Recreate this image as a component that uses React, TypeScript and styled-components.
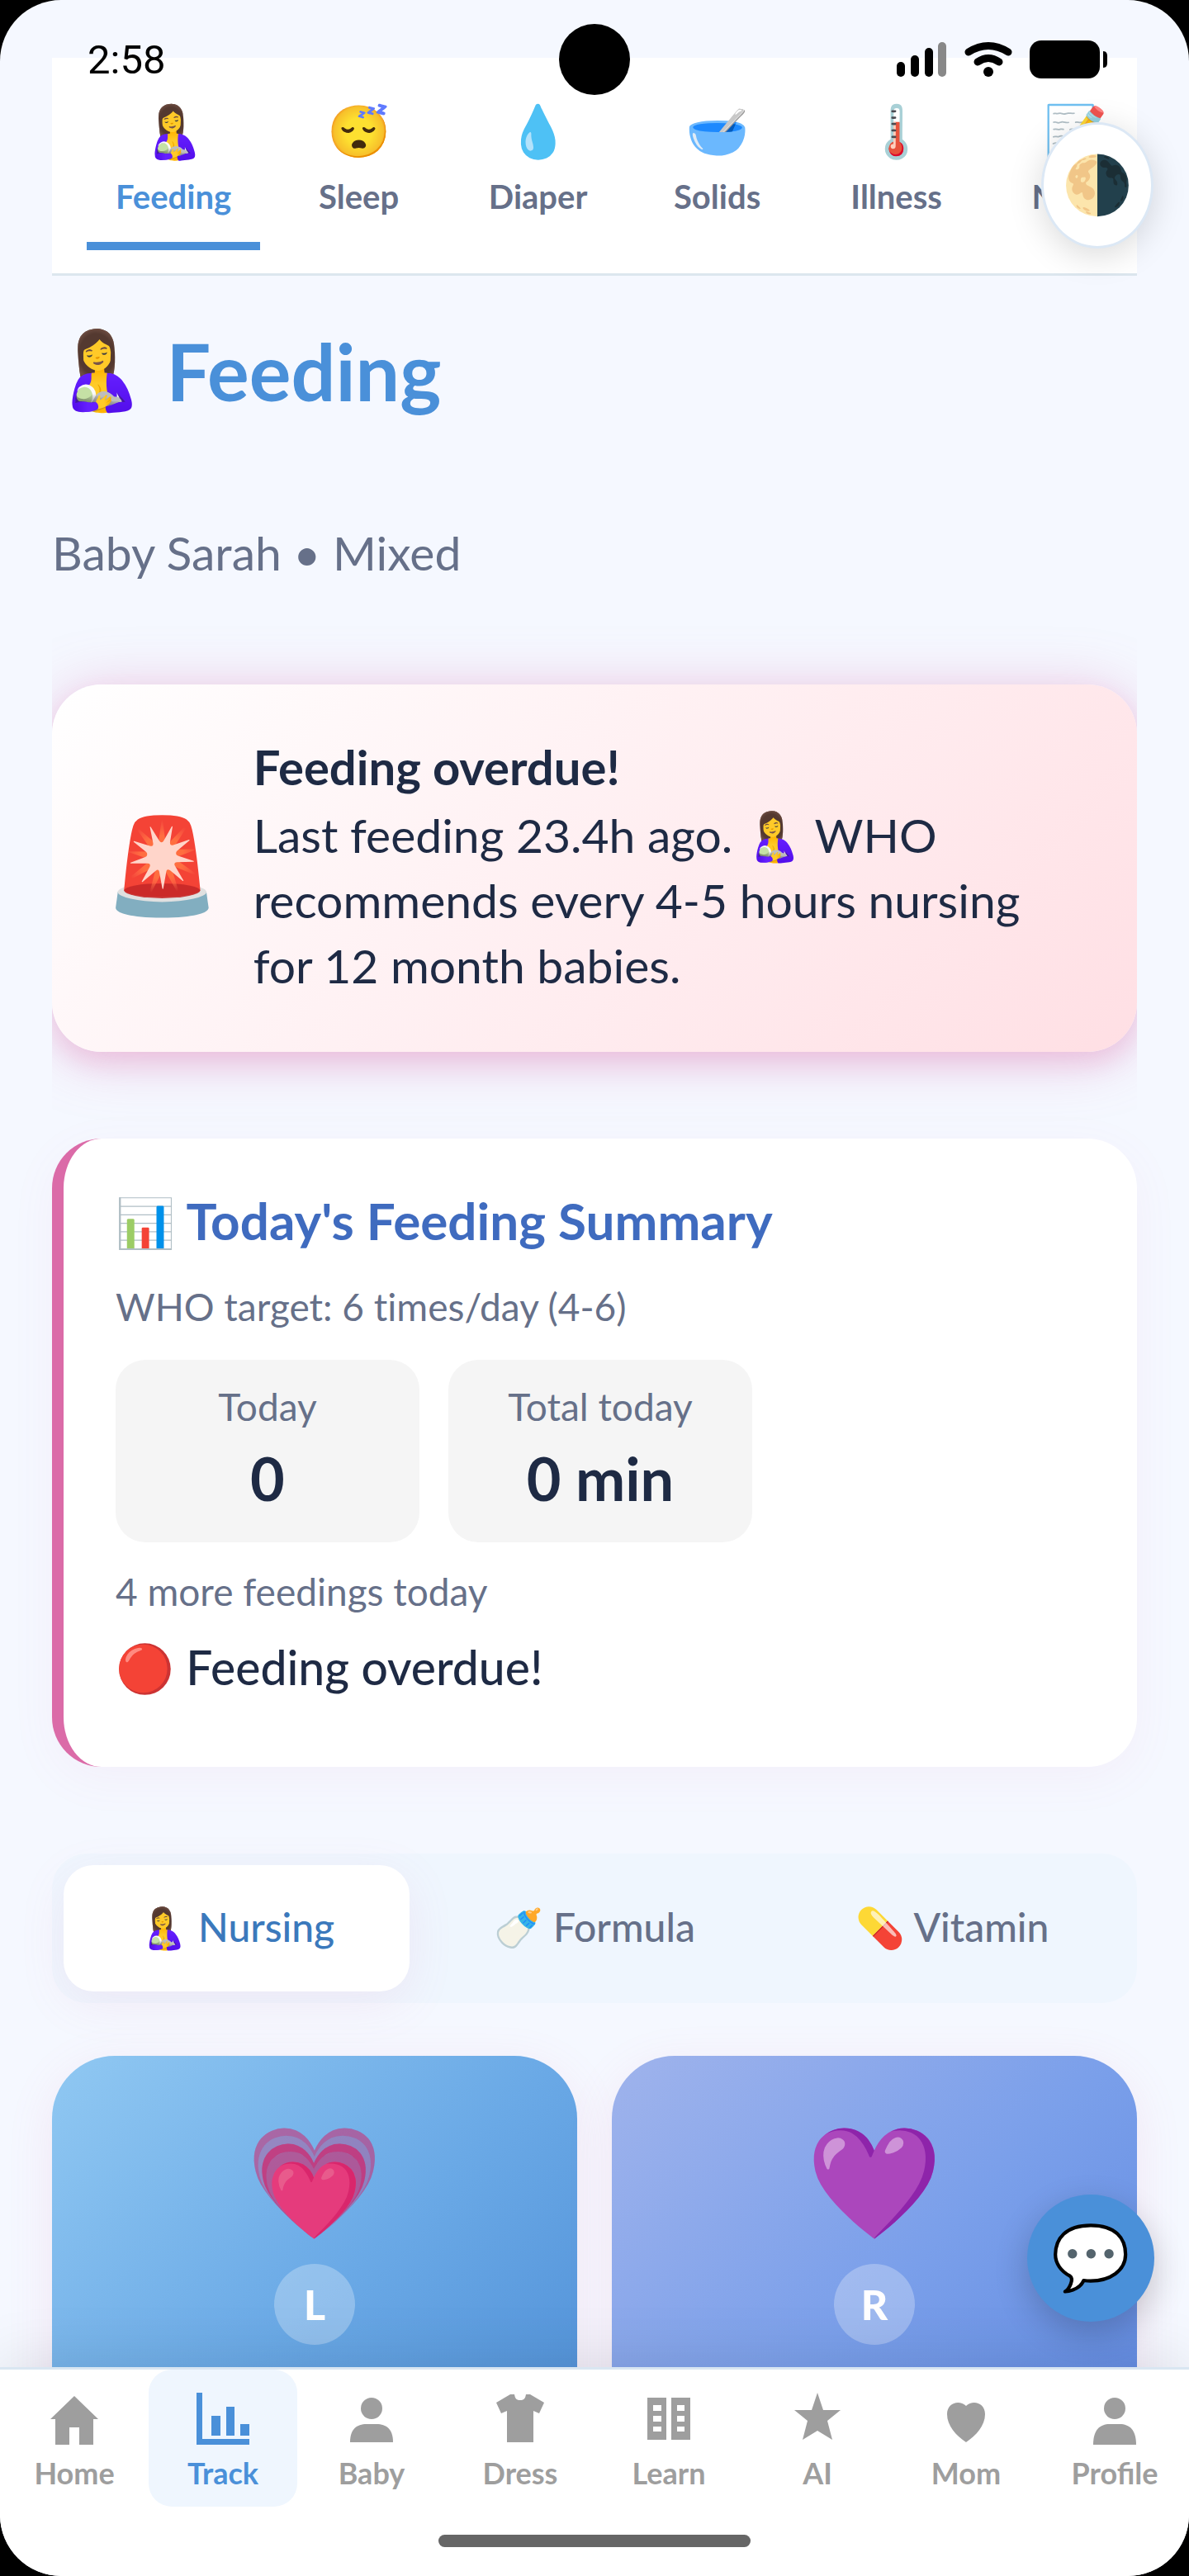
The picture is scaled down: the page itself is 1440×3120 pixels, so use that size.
import { useState } from "react";
import styled, { createGlobalStyle } from "styled-components";

const tabs = [
  { icon: "🤱", label: "Feeding" },
  { icon: "😴", label: "Sleep" },
  { icon: "💧", label: "Diaper" },
  { icon: "🥣", label: "Solids" },
  { icon: "🌡️", label: "Illness" },
  { icon: "📝", label: "Notes" },
];

const methods = [
  { icon: "🤱", label: "Nursing" },
  { icon: "🍼", label: "Formula" },
  { icon: "💊", label: "Vitamin" },
];

const navItems = [
  { label: "Home", icon: <path d="M32 4 61 32H55V63H38V42H26V63H9V32H3Z" /> },
  {
    label: "Track",
    icon: <path d="M0 0H7V56H64V63H0ZM18 28H29V52H18ZM36 17H46V52H36ZM53 38H64V52H53Z" />,
  },
  {
    label: "Baby",
    icon: (
      <>
        <circle cx="32" cy="19" r="13" />
        <path d="M6 60C6 44 14 38 26 38H38C50 38 58 44 58 60Z" />
      </>
    ),
  },
  {
    label: "Dress",
    icon: <path d="M20 2H25C26 8 28 9 32 9S38 8 39 2H44L61 12 55 25 48 22V60H16V22L9 25 3 12Z" />,
  },
  {
    label: "Learn",
    icon: (
      <path
        fillRule="evenodd"
        d="M6 6H29V57H6ZM35 6H58V57H35ZM13 15V22H23V15ZM13 28V35H23V28ZM13 41V47H23V41ZM42 15V22H51V15ZM42 28V35H51V28ZM42 41V47H51V41Z"
      />
    ),
  },
  {
    label: "AI",
    icon: <path d="M32 0 39 21H60L44 34 50 57 32 46 14 57 20 34 4 21H25Z" />,
  },
  {
    label: "Mom",
    icon: <path d="M32 60C20 52 9 40 9 26 9 12 24 8 32 16 40 8 55 12 55 26 55 40 44 52 32 60Z" />,
  },
  {
    label: "Profile",
    icon: (
      <>
        <circle cx="32" cy="19" r="13" />
        <path d="M6 63C6 45 14 38 26 38H38C50 38 58 45 58 63Z" />
      </>
    ),
  },
];

const StatusBar = () => (
  <StatusWrap>
    <Clock>2:58</Clock>
    <Camera />
    <StatusIcons width="256" height="46" viewBox="0 0 256 46">
      <rect x="0" y="26" width="10" height="18" rx="5" />
      <rect x="17" y="18" width="10" height="26" rx="5" />
      <rect x="34" y="9" width="10" height="35" rx="5" />
      <rect x="50" y="2" width="10" height="42" rx="5" fill="#888" />
      <g fill="none" stroke="#000" strokeWidth="9" strokeLinecap="round">
        <path d="M87 14Q111 -1 135 14" />
        <path d="M98 26Q111 17 124 26" />
      </g>
      <circle cx="111" cy="38" r="6" />
      <rect x="161" y="0" width="85" height="46" rx="14" />
      <path d="M250 13C254 13 255 16 255 19V27C255 30 254 33 250 33Z" />
    </StatusIcons>
  </StatusWrap>
);

const App = () => {
  const [tab, setTab] = useState("Feeding");
  const [method, setMethod] = useState("Nursing");
  const [page, setPage] = useState("Track");

  return (
    <>
      <GlobalStyle />
      <Screen>
        <StatusBar />
        <Content>
          <TabBar>
            {tabs.map(({ icon, label }) => (
              <Tab key={label} $active={tab === label} onClick={() => setTab(label)}>
                <Emoji $size={62}>{icon}</Emoji>
                {label}
              </Tab>
            ))}
          </TabBar>
          <Title>
            <Emoji $size={92}>🤱</Emoji>
            Feeding
          </Title>
          <Subtitle>Baby Sarah • Mixed</Subtitle>
          <AlertClip>
            <Alert>
              <Emoji $size={113}>🚨</Emoji>
              <div>
                <AlertTitle>Feeding overdue!</AlertTitle>
                <AlertText>
                  Last feeding 23.4h ago. 🤱 WHO recommends every 4-5 hours nursing for 12 month
                  babies.
                </AlertText>
              </div>
            </Alert>
          </AlertClip>
          <Summary>
            <SummaryTitle>
              <Emoji $size={58}>📊</Emoji> Today's Feeding Summary
            </SummaryTitle>
            <Note>WHO target: 6 times/day (4-6)</Note>
            <Stats>
              <Stat>
                <Note>Today</Note>
                <StatValue>0</StatValue>
              </Stat>
              <Stat>
                <Note>Total today</Note>
                <StatValue>0 min</StatValue>
              </Stat>
            </Stats>
            <Note>4 more feedings today</Note>
            <Overdue>🔴 Feeding overdue!</Overdue>
          </Summary>
          <Segment>
            {methods.map(({ icon, label }) => (
              <SegmentButton
                key={label}
                $active={method === label}
                onClick={() => setMethod(label)}
              >
                {icon} {label}
              </SegmentButton>
            ))}
          </Segment>
          <Sides>
            <SideButton $colors="#90c8f2, #6aa9e6 50%, #4a8ad4">
              <Emoji $size={133}>💗</Emoji>
              <SideLetter>L</SideLetter>
            </SideButton>
            <SideButton $colors="#9fb3ec, #7a9fea 50%, #5a84de">
              <Emoji $size={133}>💜</Emoji>
              <SideLetter>R</SideLetter>
            </SideButton>
          </Sides>
        </Content>
        <ThemeButton aria-label="Toggle theme">
          <Emoji $size={69}>🌗</Emoji>
        </ThemeButton>
        <ChatButton aria-label="Open chat">
          <Emoji $size={77}>💬</Emoji>
        </ChatButton>
        <BottomNav>
          <NavList>
            {navItems.map(({ icon, label }) => (
              <NavItem key={label} $active={page === label} onClick={() => setPage(label)}>
                <svg width="64" height="64" viewBox="0 0 64 64" fill="currentColor">
                  {icon}
                </svg>
                {label}
              </NavItem>
            ))}
          </NavList>
          <HomeIndicator />
        </BottomNav>
      </Screen>
    </>
  );
};
export default App;

const GlobalStyle = createGlobalStyle`
  * {
    box-sizing: border-box;
    margin: 0;
  }

  body {
    background-color: #000;
    font-family: Lato, "Noto Color Emoji", sans-serif;
    color: #1e2a44;
  }

  button {
    border: 0;
    padding: 0;
    background: none;
    font-family: inherit;
    cursor: pointer;
  }
`;

const Screen = styled.div`
  position: relative;
  display: flex;
  flex-direction: column;
  height: 100vh;
  border-radius: 74px;
  background-color: #f5f8ff;
  overflow: hidden;
`;

const StatusWrap = styled.header`
  position: absolute;
  z-index: 2;
  top: 0;
  left: 0;
  right: 0;
  display: grid;
  grid-template-columns: 1fr 86px 1fr;
  align-items: center;
  height: 144px;
  padding: 0 98px;
`;

const Clock = styled.time`
  padding-left: 8px;
  font-family: Roboto, sans-serif;
  font-size: 49px;
  color: #000;
`;

const Camera = styled.div`
  height: 86px;
  border-radius: 50%;
  background-color: #000;
`;

const StatusIcons = styled.svg`
  justify-self: end;
`;

const Content = styled.main`
  flex: 1;
  min-height: 0;
  padding: 70px 63px 0;
  overflow: hidden;
`;

const Emoji = styled.span<{ $size: number }>`
  font-family: "Noto Color Emoji", sans-serif;
  font-size: ${({ $size }) => $size}px;
  font-weight: 400;
  line-height: 1;
`;

const TabBar = styled.nav`
  display: flex;
  gap: 22px;
  height: 264px;
  padding: 42px 42px 28px;
  border-bottom: 3px solid #dce6ee;
  background-color: #fff;
  overflow: hidden;
`;

const Tab = styled.button<{ $active: boolean }>`
  display: flex;
  flex: none;
  flex-direction: column;
  align-items: center;
  gap: 23px;
  min-width: 195px;
  padding: 17px 35px 0;
  border-bottom: 10px solid ${({ $active }) => ($active ? "#4a90d9" : "transparent")};
  color: ${({ $active }) => ($active ? "#4a90d9" : "#667089")};
  font-size: 40px;
  font-weight: 700;
  line-height: 48px;
`;

const Title = styled.h1`
  display: flex;
  align-items: center;
  gap: 24px;
  margin-top: 50px;
  color: #4a90d9;
  font-size: 95px;
  font-weight: 700;
  line-height: 130px;
`;

const Subtitle = styled.p`
  margin-top: 115px;
  color: #667089;
  font-size: 57px;
  line-height: 80px;
`;

/* the alert glow is cut at the column edges */
const AlertClip = styled.div`
  margin-top: 120px;
  overflow-x: clip;
`;

const Alert = styled.section`
  display: flex;
  align-items: center;
  gap: 40px;
  padding: 61px 63px 65px;
  border-radius: 60px;
  background: linear-gradient(135deg, #fff, #ffdfe4);
  box-shadow:
    0 14px 28px rgba(219, 107, 168, 0.2),
    0 7px 70px rgba(219, 107, 168, 0.35);
`;

const AlertTitle = styled.h2`
  margin-bottom: 4px;
  font-size: 58px;
  font-weight: 700;
  line-height: 78px;
`;

const AlertText = styled.p`
  font-size: 57px;
  line-height: 79px;
`;

const Summary = styled.section`
  margin-top: 105px;
  padding: 60px 63px 82px;
  border-left: 14px solid #db6ba8;
  border-radius: 60px;
  background-color: #fff;
  box-shadow: 0 14px 56px rgba(219, 107, 168, 0.06);
`;

const SummaryTitle = styled.h2`
  margin-bottom: 34px;
  color: #3f6bbf;
  font-size: 62px;
  font-weight: 700;
  line-height: 78px;
`;

const Note = styled.p`
  color: #667089;
  font-size: 46px;
  font-variant-ligatures: none;
  line-height: 64px;
`;

const Stats = styled.div`
  display: flex;
  gap: 35px;
  margin: 32px 0 28px;
`;

const Stat = styled.div`
  display: flex;
  flex-direction: column;
  gap: 9px;
  width: 368px;
  padding: 25px 0 33px;
  border-radius: 36px;
  background-color: #f5f5f5;
  text-align: center;
`;

const StatValue = styled.strong`
  font-size: 72px;
  font-weight: 700;
  line-height: 90px;
`;

const Overdue = styled.p`
  margin-top: 20px;
  font-size: 57px;
  font-weight: 500;
  line-height: 78px;
`;

const Segment = styled.div`
  display: flex;
  gap: 14px;
  margin-top: 105px;
  padding: 14px;
  border-radius: 42px;
  background-color: #eff6fe;
`;

const SegmentButton = styled.button<{ $active: boolean }>`
  flex: 1;
  height: 153px;
  padding-bottom: 3px;
  border-radius: 36px;
  background-color: ${({ $active }) => ($active ? "#fff" : "transparent")};
  box-shadow: ${({ $active }) => ($active ? "0 14px 56px rgba(219, 107, 168, 0.1)" : "none")};
  color: ${({ $active }) => ($active ? "#3b79bc" : "#667089")};
  font-size: 48px;
  font-weight: 500;
`;

const Sides = styled.div`
  display: grid;
  grid-template-columns: 1fr 1fr;
  gap: 42px;
  margin-top: 64px;
`;

const SideButton = styled.button<{ $colors: string }>`
  display: flex;
  flex-direction: column;
  align-items: center;
  gap: 31px;
  height: 600px;
  padding-top: 88px;
  border-radius: 76px;
  background: linear-gradient(135deg, ${({ $colors }) => $colors});
  box-shadow: 0 14px 56px rgba(219, 107, 168, 0.12);
`;

const SideLetter = styled.span`
  width: 98px;
  border-radius: 50%;
  background-color: rgba(255, 255, 255, 0.27);
  color: #fff;
  font-size: 50px;
  font-weight: 900;
  line-height: 98px;
`;

const FloatingButton = styled.button`
  position: absolute;
  z-index: 1;
  display: flex;
  align-items: center;
  justify-content: center;
  border-radius: 50%;
`;

const ThemeButton = styled(FloatingButton)`
  top: 148px;
  right: 43px;
  width: 136px;
  height: 153px;
  border: 3px solid #dce8f5;
  background-color: #fff;
  box-shadow: 0 8px 42px rgba(0, 0, 0, 0.15);
`;

const ChatButton = styled(FloatingButton)`
  right: 42px;
  bottom: 308px;
  width: 154px;
  height: 154px;
  background-color: #4a90d9;
  box-shadow: 0 14px 42px rgba(0, 0, 0, 0.2);
`;

const BottomNav = styled.footer`
  position: relative;
  border-top: 3px solid #d9e6f2;
  background-color: #fff;
  box-shadow: 0 -7px 70px rgba(0, 0, 0, 0.1);
`;

const NavList = styled.nav`
  display: grid;
  grid-template-columns: repeat(8, 1fr);
`;

const NavItem = styled.button<{ $active: boolean }>`
  display: flex;
  flex-direction: column;
  align-items: center;
  gap: 11px;
  height: 166px;
  padding-top: 28px;
  border-radius: 28px;
  background-color: ${({ $active }) => ($active ? "#eff6fe" : "transparent")};
  color: ${({ $active }) => ($active ? "#4a90d9" : "#9e9e9e")};
  font-size: 36px;
  font-weight: 700;
  line-height: 44px;
`;

const HomeIndicator = styled.div`
  width: 378px;
  height: 15px;
  margin: 34px auto 35px;
  border-radius: 8px;
  background-color: #666;
`;
